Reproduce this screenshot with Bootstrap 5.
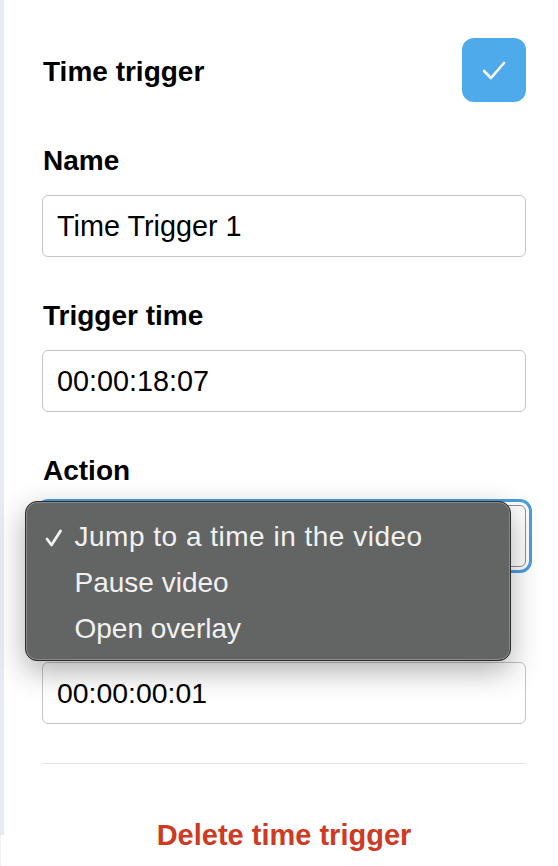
<!DOCTYPE html>
<html lang="en">

<head>
    <meta charset="UTF-8">
    <meta name="viewport" content="width=device-width, initial-scale=1">
    <title>Time trigger</title>
    <link href="https://cdn.jsdelivr.net/npm/bootstrap@5.3.3/dist/css/bootstrap.min.css" rel="stylesheet">
    <style>
        body {
            font-family: "Liberation Sans", Arial, sans-serif;
            color: #000;
            overflow: hidden;
        }

        .side-panel {
            height: 866px;
            padding: 38px 32px 0 42px;
            position: relative;
            background:
                linear-gradient(#e8ebf2, #e8ebf2) no-repeat 0 0 / 4px 835px,
                linear-gradient(#eef0f4, #eef0f4) no-repeat 0 835px / 1px 31px;
        }

        .panel-title {
            font-size: 28px;
            font-weight: 700;
            margin: 0;
            padding: 4px 0 0 1px;
        }

        .save-btn {
            width: 64px;
            height: 64px;
            border-radius: 12px;
            background: #4eaaea;
            border: 0;
            padding: 0;
        }

        .field-label {
            display: block;
            font-size: 28px;
            font-weight: 700;
            line-height: 32px;
            padding: 1px 0 0 1px;
            margin-bottom: 18px;
        }

        .field-block {
            margin-bottom: 42px;
        }

        .name-block {
            margin-top: 42px;
        }

        .last-block {
            margin-top: 44px;
        }

        .field-input.form-control {
            height: 62px;
            font-size: 28.8px;
            color: #000;
            border: 1px solid #c4c4c4;
            border-radius: 6px;
            padding: 0 14px;
        }

        .last-block .field-input.form-control {
            font-size: 28.4px;
        }

        .action-box {
            height: 62px;
            border: 1px solid #8f8f8f;
            border-radius: 6px;
            outline: 3px solid #4a9fe0;
            outline-offset: 3px;
        }

        .select-menu {
            position: absolute;
            left: 25px;
            top: 501px;
            width: 486px;
            height: 160px;
            background: #636565;
            border: 1px solid #2b2b2b;
            border-radius: 12px;
            box-shadow: inset 0 0 0 1px #8a8a8a, 0 10px 30px rgba(0, 0, 0, .32);
            color: #f1f1f1;
            font-size: 28px;
            padding: 12px 0 0 0;
        }

        .menu-line {
            height: 46px;
            line-height: 46px;
            padding-left: 48.5px;
            position: relative;
        }

        .menu-line-wide {
            letter-spacing: .5px;
        }

        .menu-tick {
            position: absolute;
            left: 19px;
            top: 15px;
        }

        .panel-rule {
            border-top: 1px solid #e3e3e3;
            margin: 39px 0 0 0;
            opacity: 1;
        }

        .delete-link {
            font-size: 29px;
            font-weight: 700;
            color: #cf3a24;
            text-decoration: none;
            margin-top: 50px;
        }
    </style>
</head>

<body>
    <div class="side-panel">
        <div class="d-flex justify-content-between align-items-center panel-head">
            <h1 class="panel-title">Time trigger</h1>
            <button type="button" class="save-btn d-flex align-items-center justify-content-center" aria-label="Save">
                <svg width="24" height="20" viewBox="0 0 24 20" fill="none" stroke="#fff" stroke-width="2.6"
                    stroke-linecap="round" stroke-linejoin="round">
                    <path d="M2 11l7 7L22 3" />
                </svg>
            </button>
        </div>

        <div class="field-block name-block">
            <label class="field-label">Name</label>
            <input type="text" class="form-control field-input" value="Time Trigger 1">
        </div>

        <div class="field-block">
            <label class="field-label">Trigger time</label>
            <input type="text" class="form-control field-input" value="00:00:18:07">
        </div>

        <div>
            <label class="field-label">Action</label>
            <div class="action-box"></div>
        </div>

        <div class="last-block">
            <label class="field-label invisible">Jump to</label>
            <input type="text" class="form-control field-input" value="00:00:00:01">
        </div>

        <hr class="panel-rule">

        <div class="text-center delete-wrap">
            <a href="#" class="delete-link d-inline-block">Delete time trigger</a>
        </div>

        <div class="select-menu">
            <div class="menu-line menu-line-wide">
                <svg class="menu-tick" width="18" height="18" viewBox="0 0 18 18" fill="none" stroke="#f1f1f1"
                    stroke-width="2.8" stroke-linecap="round" stroke-linejoin="round">
                    <path d="M2 10l4.500 6L15.500 2" />
                </svg>
                Jump to a time in the video
            </div>
            <div class="menu-line">Pause video</div>
            <div class="menu-line">Open overlay</div>
        </div>
    </div>

    <script src="https://cdn.jsdelivr.net/npm/bootstrap@5.3.3/dist/js/bootstrap.bundle.min.js"></script>
</body>

</html>
